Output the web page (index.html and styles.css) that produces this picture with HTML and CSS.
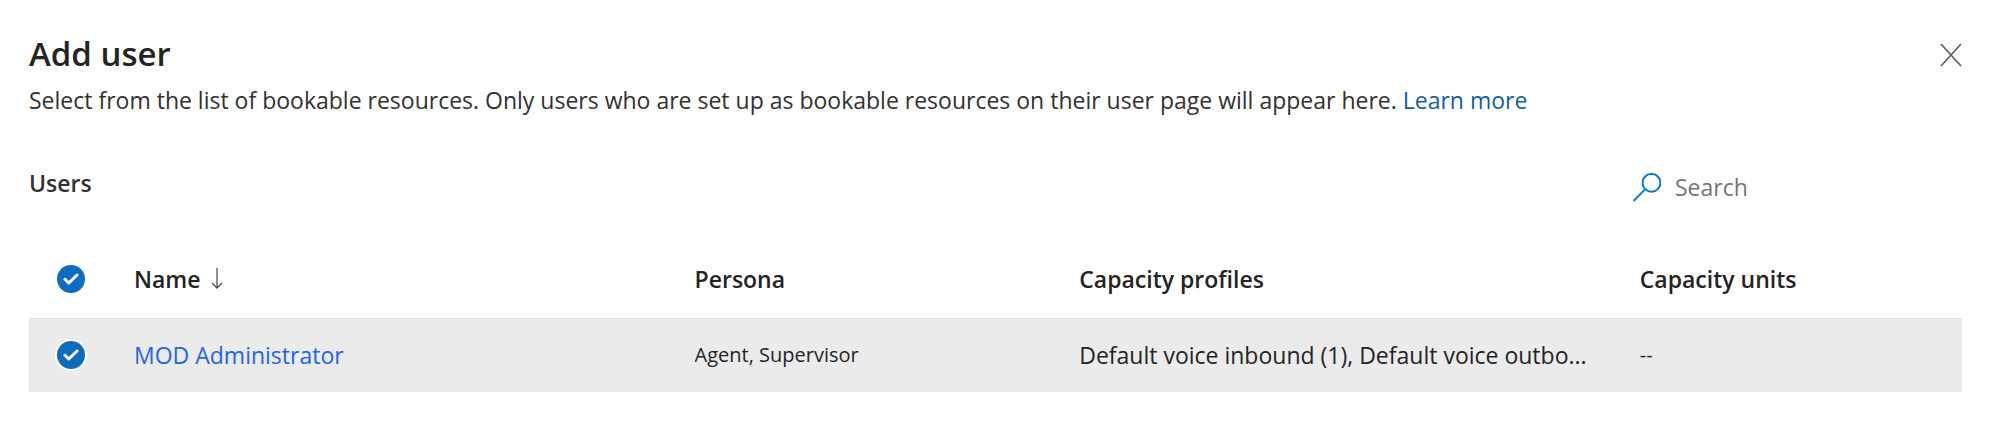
FILE: index.html
```html
<!DOCTYPE html>
<html lang="en">
<head>
<meta charset="utf-8">
<title>Add user</title>
<link rel="stylesheet" href="styles.css">
</head>
<body>
<main class="panel">
  <header class="panel-header">
    <div class="intro">
      <h1 class="title">Add user</h1>
      <p class="description">Select from the list of bookable resources. Only users who are set up as bookable resources on their user page will appear here. <a class="learn-more" href="#">Learn more</a></p>
    </div>
    <button class="close" type="button" aria-label="Close">
      <svg width="22" height="24" viewBox="0 0 22 24" fill="none" stroke="currentColor" stroke-width="1.7"><path d="M1 1l20 22M21 1L1 23"/></svg>
    </button>
  </header>
  <div class="toolbar">
    <h2 class="subtitle">Users</h2>
    <label class="search">
      <svg width="28" height="29" viewBox="0 0 28 29" fill="none" stroke="currentColor" stroke-width="1.9"><circle cx="18.5" cy="9.8" r="8.9"/><path d="M12.2 16.2L.6 28"/></svg>
      <input class="search-input" type="search" placeholder="Search" aria-label="Search">
    </label>
  </div>
  <table class="users">
    <colgroup>
      <col class="col-check"><col class="col-name"><col class="col-persona"><col class="col-profiles"><col>
    </colgroup>
    <thead>
      <tr>
        <th scope="col"><label class="check"><input type="checkbox" checked aria-label="Select all users"><svg class="tick" width="16" height="12" viewBox="0 0 16 12"><path d="M2 6.3L5.8 10L14 2"/></svg></label></th>
        <th scope="col"><span class="sort">Name <svg width="12" height="21" viewBox="0 0 12 21" fill="none" stroke="#505050" stroke-width="1.3"><path d="M6 0v20M1 15l5 5 5-5"/></svg></span></th>
        <th scope="col">Persona</th>
        <th scope="col">Capacity profiles</th>
        <th scope="col">Capacity units</th>
      </tr>
    </thead>
    <tbody>
      <tr>
        <td><label class="check check-ring"><input type="checkbox" checked aria-label="Select MOD Administrator"><svg class="tick" width="16" height="12" viewBox="0 0 16 12"><path d="M2 6.3L5.8 10L14 2"/></svg></label></td>
        <td><a class="user-link" href="#">MOD Administrator</a></td>
        <td class="small">Agent, Supervisor</td>
        <td>Default voice inbound (1), Default voice outbo...</td>
        <td class="small">--</td>
      </tr>
    </tbody>
  </table>
</main>
</body>
</html>
```
FILE: styles.css
```css
* { box-sizing: border-box; }

body {
  margin: 0;
  background: #fff;
  color: #242424;
  font-family: "Open Sans", "Noto Sans", sans-serif;
  font-size: 23px;
  line-height: 32px;
}

a { text-decoration: none; }

.panel { padding: 32px 41px 32px 29px; }

.panel-header {
  display: flex;
  justify-content: space-between;
  align-items: flex-start;
}

.title {
  margin: 0;
  font-size: 33px;
  line-height: 44px;
  font-weight: 600;
}

.description { margin: 8px 0 0; color: #323130; }

.learn-more { color: #115ea3; }

.close {
  display: grid;
  padding: 11px 0;
  border: 0;
  background: none;
  color: #605e5c;
}

.toolbar {
  display: flex;
  justify-content: space-between;
  align-items: center;
  margin-top: 47px;
}

.subtitle {
  margin: 0;
  font-size: 23px;
  font-weight: 600;
  color: #323130;
}

.search {
  display: flex;
  align-items: center;
  gap: 14px;
  width: 329px;
  padding-top: 8px;
  color: #0078d4;
}

.search-input {
  flex: 1;
  min-width: 0;
  padding: 0;
  border: 0;
  outline: 0;
  background: none;
  font: inherit;
  color: #323130;
}

.search-input::placeholder { color: #757575; }

.users {
  width: 100%;
  margin-top: 37px;
  border-collapse: collapse;
  table-layout: fixed;
  text-align: left;
}

.col-check { width: 105px; }
.col-name { width: 29%; }
.col-persona { width: 19.9%; }
.col-profiles { width: 29%; }

.users th,
.users td {
  height: 74px;
  padding: 0 32px 0 0;
  overflow: hidden;
  text-overflow: ellipsis;
  white-space: nowrap;
  vertical-align: middle;
}

.users th {
  height: 78px;
  font-weight: 600;
}

.users th:first-child,
.users td:first-child { padding: 0 0 0 26px; }

.users tbody tr {
  background: #ebebeb;
  border-top: 1px solid #dcdcdc;
}

.users .small { font-size: 20px; }

.sort {
  display: flex;
  align-items: center;
  gap: 10px;
}

.user-link { color: #2266e3; }

.check {
  display: grid;
  place-items: center;
  width: 32px;
  height: 32px;
  border-radius: 50%;
}

.check-ring { background: #fff; }

.check > * { grid-area: 1 / 1; }

.check input {
  appearance: none;
  width: 28px;
  height: 28px;
  margin: 0;
  border-radius: 50%;
  background: #0f6cbd;
}

.tick {
  fill: none;
  stroke: #fff;
  stroke-width: 3;
  stroke-linecap: round;
  stroke-linejoin: round;
  pointer-events: none;
}
```
